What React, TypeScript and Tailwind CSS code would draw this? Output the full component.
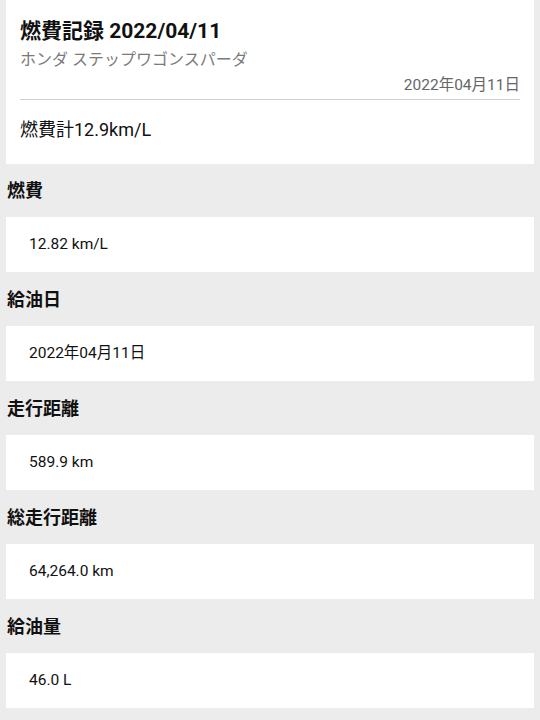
import React from 'react'

const font = { fontFamily: 'Roboto, "Noto Sans CJK JP", sans-serif' }

interface Item {
  label: string;
  value: string;
}

const items: Item[] = [
  { label: '燃費', value: '12.82 km/L' },
  { label: '給油日', value: '2022年04月11日' },
  { label: '走行距離', value: '589.9 km' },
  { label: '総走行距離', value: '64,264.0 km' },
  { label: '給油量', value: '46.0 L' },
]

const App: React.FC = () => {
  return (
    <div className="min-h-[720px] bg-[#ececec] px-[6px] font-['Roboto','Noto_Sans_CJK_JP',sans-serif]" style={font}>
      <div className="flex h-[164px] flex-col bg-white px-[14px] pt-[17px]">
        <h1 className="text-[21px] font-bold leading-[28px] text-[#111]">燃費記録 2022/04/11</h1>
        <p className="mt-[3px] text-[16px] leading-[24px] text-[#7a7a7a]">ホンダ ステップワゴンスパーダ</p>
        <p className="mt-[2px] text-right text-[15.5px] leading-[22px] text-[#666]">2022年04月11日</p>
        <div className="mt-[3px] h-px bg-[#cfcfcf]" />
        <p className="mt-[17px] text-[18px] leading-[26px] text-[#111]">燃費計12.9km/L</p>
      </div>
      {items.map((item) => (
        <div key={item.label}>
          <div className="flex h-[53px] items-center pl-[1px]">
            <h2 className="text-[18px] font-bold text-[#111]">{item.label}</h2>
          </div>
          <div className="mb-[1px] flex h-[55px] items-center bg-white px-[23px]">
            <span className="text-[15.5px] text-[#111]">{item.value}</span>
          </div>
        </div>
      ))}
    </div>
  )
}

export default App
